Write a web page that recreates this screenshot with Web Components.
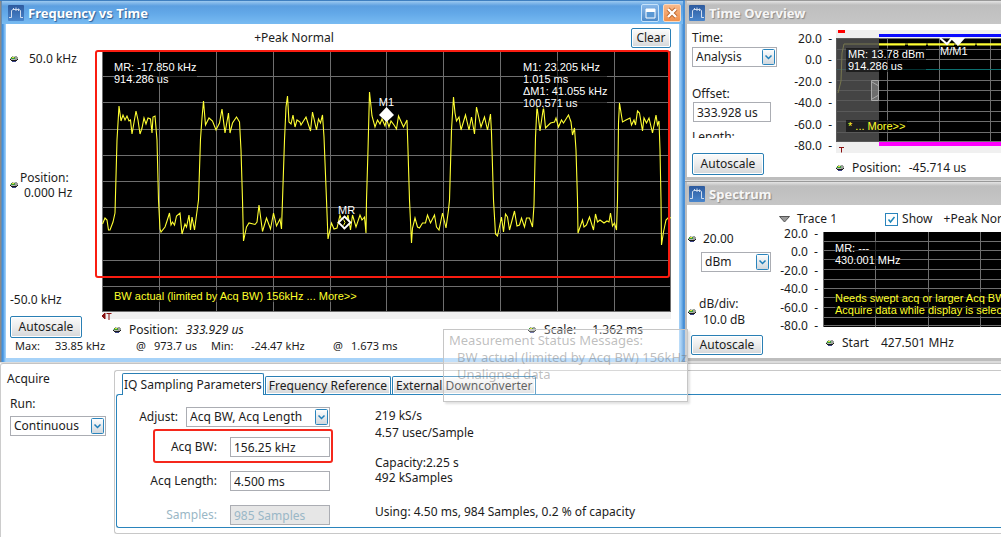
<!DOCTYPE html>
<html lang="en">
<head>
<meta charset="utf-8">
<title>Signal Analyzer</title>
<style>
html,body{margin:0;background:#fff}
body{font:12px/16px "Noto Sans","DejaVu Sans",sans-serif;color:#1c1c1c}
</style>
</head>
<body>
<analyzer-app></analyzer-app>
<script>
const base = `
*{box-sizing:border-box}
[hidden]{display:none}
button{font:inherit;color:inherit;height:22px;width:72px;padding:0;border:1px solid #2a7fb4;border-radius:2px;
 background:linear-gradient(#fbfbfb,#ececec 50%,#d4d6d8);box-shadow:inset 0 0 0 1px #fff;white-space:nowrap}
input,select{font:inherit;color:inherit;border:1px solid #abadb3;border-radius:0;background:#fff;height:20px;margin:0;outline:0}
input{padding:0 3px;width:100px}
select{appearance:none;padding:0 22px 0 3px;width:100%}
.combo{position:relative;display:block}
.combo svg{position:absolute;right:2px;top:2px;pointer-events:none}
label{display:block}
`;
const arrow = `<svg width="13" height="16" viewBox="0 0 13 16"><defs><linearGradient id="a" x2="0" y2="1"><stop stop-color="#fff"/><stop offset="1" stop-color="#cfd6dc"/></linearGradient></defs><rect x=".5" y=".5" width="12" height="15" rx="1" fill="url(#a)" stroke="#2a84bc"/><path d="M3.5 6.5l3 3 3-3" fill="none" stroke="#1f7fba" stroke-width="1.5"/></svg>`;
const define = (name, html) => {
  const t = document.createElement('template');
  t.innerHTML = html;
  customElements.define(name, class extends HTMLElement {
    constructor(){ super(); this.attachShadow({mode:'open'}).append(t.content.cloneNode(true)); }
  });
};
const lines = (list, fn) => list.map(fn).join('');

define('spin-knob', `<style>:host{display:block;width:8px;height:8px;flex:none}svg{display:block}</style>
<svg width="8" height="8" viewBox="0 0 8 8" shape-rendering="crispEdges"><path d="M2 1h5v1H2zM5 2h3v3H5z" fill="#9a9f9a"/><path d="M3 1h2v1H3z" fill="#cfd6cc"/><path d="M1 2h4v2H1z" fill="#3a9a3a"/><path d="M2 2h2v1H2z" fill="#e5e23c"/><path d="M0 3h1v2H0zM1 4h4v1H1z" fill="#b4b8b4"/><path d="M1 5h6v1H1zM0 4h1v1H0zM7 4h1v1H7z" fill="#1a1a1a"/><path d="M2 6h4v1H2z" fill="#3c4488"/></svg>`);

/* Window frame: a title bar with a spectrum icon, and a slot for the view */
define('scope-window', `<style>${base}
:host{display:flex;flex-direction:column;min-width:0;padding:0 0 3px 2px;background:#bdbdbd;border-top:1px solid #999}
header{height:23px;display:flex;align-items:center;gap:4px;padding:0 3px 0 2px;color:#f6f6f6;font:bold 13px/20px "Noto Sans",sans-serif;
 background:linear-gradient(#e4e4e4,#bebebe 4px,#c6c6c6);text-shadow:1px 1px 1px #8a8a8a;white-space:nowrap}
h2{font:inherit;margin:0;flex:1}
.view{background:#fff;flex:1;min-height:0;display:flex}
.view ::slotted(*){flex:1;min-width:0}
.ctl{display:none}
:host([active]){padding:0 5px 4px 6px;border-top:1px solid #3f7fc0;border-right:1px solid #4a90d8;
 background:linear-gradient(90deg,#8a8a8a 1px,#4090dc 2px,#4694e0 3px,#8cc4f4 5px,#a6d2f8 6px,#a6d2f8 calc(100% - 5px),#84bdf0 calc(100% - 3px),#3b86d0)}
:host([active]) header{background:linear-gradient(#9cc9f0,#5c9fe0 5px,#62a8e8 12px,#78bbf2);margin:0 -4px 0 -4px;padding:0 2px 0 6px;color:#fff;text-shadow:1px 1px 1px #2c5c94}
:host([active]) .ctl{display:block;width:18px;height:18px;padding:0;border:1px solid #c5e2fb;border-radius:2px;background:linear-gradient(#86b6e8,#4f8bc9);box-shadow:none}
:host([active]) .x{background:linear-gradient(#f8b98b,#f0904c);border-color:#fbd9bf}
.ctl svg,header>svg{display:block;flex:none}
</style>
<header><svg width="16" height="16" viewBox="0 0 16 16"><defs><linearGradient id="g" x2="0" y2="1"><stop stop-color="#2d5a9e"/><stop offset="1" stop-color="#4a86cc"/></linearGradient></defs><rect width="16" height="16" rx="1" fill="url(#g)"/><path d="M1 12.500h2.500V5.500L5 4.500h6l1.500 1V12.500H15M5.500 4.500V3M8 6V2.500M10.500 6V3.500" fill="none" stroke="#d0dcee" stroke-width="1"/></svg>
<h2><slot name="title"></slot></h2>
<button class="ctl" aria-label="Maximize"><svg width="16" height="16" viewBox="0 0 16 16"><path d="M4 4h9v9H4z" fill="#5a98d4" stroke="#fff"/><path d="M4 4h9v3H4z" fill="#fff"/></svg></button>
<button class="ctl x" aria-label="Close"><svg width="16" height="16" viewBox="0 0 16 16"><path d="M4 4l8 8M12 4l-8 8" stroke="#b9652c" stroke-width="4"/><path d="M4 4l8 8M12 4l-8 8" stroke="#fff" stroke-width="2.400"/></svg></button>
</header>
<div class="view"><slot></slot></div>`);

const wave = "102.5,224 105,218 107,220 108.5,230 110,230 113,222 115,213 117,140 119,106 121,121 123,115 125,120 127,116 129,121 130.5,120 132,134 136,111 138,120 140,134 142,128 144,118 146,124 148,118 150.5,119 152,133 153,117 155,116 157,140 158.5,200 160,229 161,232 165,227 167,221 169.5,213 171,225 172.5,222 174.5,225 176.5,216 180,213 182,234 185,224 186.5,227 189,215 190.5,230 192,217 194.5,230 196.5,215 198.500,200 200.5,139 202,118 203.5,101 205.5,125 209,118 212.5,121 216,130 219.5,123 222,109 225,133 228.5,113 230,133 232.5,123 236.5,117 239.5,122 241,150 242.5,200 243.5,241 246.5,227 249,223 255,224.5 257,222 259,205 262.5,231.5 266.5,218 270.5,229 273.5,213 276.5,226 280,219 281.5,229 282.5,200 284.5,140 286,107 287.5,96 289,122 291,124 293,115 295,127 297,120 300,122 301,125 306,117 310.5,131 312.5,112 316.5,130 318.5,119 320.5,123 322.5,115 324,137 326.5,200 328,239 331.5,223 334,229 337,228 340,215 344,228 348,215 350.5,230 352.5,215 356,227 360,215 362,220 364.5,217 366,233 366.5,200 368,150 369.5,92 372,116 375,127 377.5,120 380,124 382,119 385,126 386.5,119 389,127 391,121 394,125 396.5,129 398.5,116 403.5,127 407,120 408,150 409.5,200 411.5,243 412.5,228 415,218 417.5,227 419.5,228 422.5,223 425.5,223 427.5,215 430.5,223 434.5,215 436.5,227 439,230 442.5,213 446,228 448.5,210 449.5,200 451.5,130 453.5,97 455,113 456.5,121 459,117 461,130 465.5,115 469,130 471.5,117 474.5,134 476.5,107 481,127 484.5,117 487.5,130 490.5,114 491.5,133 493.5,200 495.5,234 497.5,236 501.5,217 503.5,232 505.5,214 507.5,217 509.5,230 514.5,211 517,226 519.5,225 521.5,218 524.5,227 526.5,218 529.5,218 532.5,227 534,205 535.5,137 537,106 540,131 543.5,107 545.5,128 550.5,123 554.5,122 556,118 558.5,127 561.5,120 563.5,123 568.5,115 571,122 572.5,135 574.5,128 576,150 577.5,200 578,233 582.5,220 584,227 586.5,225 589.5,217 593.5,230 595.5,214 597.5,222 600,220 604,223 607,221 609,222 610.5,213 612.5,226 614.5,223 616.5,230 617.5,200 618.5,123 619.5,103 622.5,122 626,120 630,118 631.5,125 634,120 635.5,125 637.5,111 639.5,113 642.5,131 644,118 646.5,123 649,118 652.5,133 656,115 657.5,125 659,121 660,150 661,200 661.5,245 663.5,232 666,220 669,217 671,218";

const note = `.note{position:absolute;font:11px/12px "Liberation Sans",Arial,sans-serif;color:#fff;background:rgba(0,0,0,.55);white-space:nowrap}
.yel{color:#ffff2a}
svg.plot{display:block;width:100%;height:100%}`;

define('frequency-view', `<style>${base}${note}
:host{display:grid;grid-template-columns:96px minmax(0,1fr) 8px;grid-template-rows:27px minmax(268px,1fr) 19px 16px 4px}
.top{grid-column:1/3;display:grid;grid-template-columns:248fr auto 337fr;align-items:center}
.top button{width:40px;height:20px;justify-self:end}
.side{grid-row:2/4;display:flex;flex-direction:column;padding-left:4px}
.side p,.side div{margin:0}
.row{display:flex;align-items:center;gap:11px}
.mid{display:grid;grid-template-columns:8px auto;column-gap:2px;line-height:15px;align-items:center;justify-content:start;padding-top:10px}
.mid spin-knob{grid-row:1/3}
.mid b{font-weight:400;padding-left:4px}
.fill{flex:1}
.side button{margin:8px 0 0}
.graph{position:relative;grid-column:2;display:flex;flex-direction:column}
.scr{position:relative;flex:1;min-height:0;background:#000}
.strip{height:7px;background:#f0f0f0}
.trig{position:absolute;left:-1px;bottom:-5px;display:block}
.box{position:absolute;left:-7px;top:-1px;right:1px;bottom:34px;border:2px solid #fa1c10;border-radius:3px}
.mark{transform:translateX(-50%);background:none}
.foot{grid-column:2;display:flex;align-items:center;justify-content:space-between;padding:3px 28px 0 11px}
.foot span{display:flex;align-items:center;gap:8px}
.foot b{font-weight:400;margin-left:8px}
.stats{grid-column:1/3;display:grid;grid-template-columns:40px 81px 18px 57px 40px 82px 18px 1fr;padding-left:9px;font-size:11px;line-height:16px;white-space:nowrap}
</style>
<div class="top"><span></span><span>+Peak Normal</span><button>Clear</button></div>
<div class="side">
 <div class="row"><spin-knob></spin-knob><span>50.0 kHz</span></div>
 <div class="fill"></div>
 <div class="mid"><spin-knob></spin-knob><span>Position:</span><b>0.000 Hz</b></div>
 <div class="fill"></div>
 <p>-50.0 kHz</p>
 <button>Autoscale</button>
</div>
<div class="graph"><div class="scr">
 <svg class="plot" viewBox="102 51 569 261" preserveAspectRatio="none">
 <g stroke="#6e6e6e" shape-rendering="crispEdges">${lines([102.5,159.5,216.5,273.5,330.5,386.5,443.5,500.5,557.5,614.5,670.5],x=>`<path d="M${x} 51V312"/>`)}${lines([51.5,76.5,102.5,129.5,155.5,181.5,207.5,233.5,260.5,286.5,311.5],y=>`<path d="M102 ${y}H671"/>`)}</g>
 <polyline points="${wave}" fill="none" stroke="#ffff32" stroke-width="1.1"/>
 <path d="M386.5 107l7.500 8-7.500 7-7.500-7z" fill="#fff"/>
 <path d="M344.500 216.500l6 6-6 6-6-6z" fill="#000" stroke="#fff" stroke-width="1.800"/><path d="M343.500 219.500q3 3 0 6" stroke="#ffff32" fill="none"/>
 </svg>
 <div class="note" style="left:12px;top:10px">MR: -17.850 kHz<br>914.286 us</div>
 <div class="note" style="left:421px;top:10px">M1: 23.205 kHz<br>1.015 ms<br>ΔM1: 41.055 kHz<br>100.571 us</div>
 <div class="note mark" style="left:50%;top:45px">M1</div>
 <div class="note mark" style="left:43%;top:153px">MR</div>
 <div class="note yel" style="left:12px;bottom:10px">BW actual (limited by Acq BW) 156kHz ... More&gt;&gt;</div>
 <div class="box"></div>
 </div><div class="strip"></div>
 <svg class="trig" width="12" height="12" viewBox="0 0 12 12"><path d="M4 1v6L1 4zM5.500 1.500h5M8 1.500V8" fill="#8a1010" stroke="#8a1010"/></svg>
</div>
<div class="foot"><span><spin-knob></spin-knob>Position:<i>333.929 us</i></span><span><spin-knob></spin-knob>Scale:<b>1.362 ms</b></span></div>
<div class="stats"><span>Max:</span><span>33.85 kHz</span><span>@</span><span>973.7 us</span><span>Min:</span><span>-24.47 kHz</span><span>@</span><span>1.673 ms</span></div>`);

const axis = `.axis{display:flex;flex-direction:column;justify-content:space-between;text-align:right;white-space:pre}`;

define('time-view', `<style>${base}${note}${axis}
:host{display:grid;grid-template-columns:93px 56px minmax(0,1fr);height:153px}
.side{display:flex;flex-direction:column;align-items:flex-start;padding:6px 0 0 5px}
.combo{width:85px;margin:1px 0 19px}
.side input{width:78px;margin-left:1px}
.cut{height:9px;overflow:hidden;line-height:16px;margin:7px 0 15px}
.axis{padding:7px 4px 0 0;height:130px}
.right{display:flex;flex-direction:column;padding-top:6px;overflow:hidden}
.scr{position:relative;flex:none;height:123px;background:#f0f0f0}
.scr svg{width:auto;height:100%}
.foot{display:flex;flex:none;align-items:center;gap:8px;height:24px;padding-top:6px;white-space:nowrap}
</style>
<div class="side"><label for="t">Time:</label><span class="combo"><select id="t"><option>Analysis</option></select>${arrow}</span>
<label for="o">Offset:</label><input id="o" value="333.928 us"><div class="cut">Length:</div><button>Autoscale</button></div>
<div class="axis"><span>20.0  -</span><span>0.0  -</span><span>-20.0  -</span><span>-40.0  -</span><span>-60.0  -</span><span>-80.0  -</span></div>
<div class="right"><div class="scr">
<svg class="plot" viewBox="836 30 565 123" preserveAspectRatio="xMinYMin slice">
<path d="M836 38h565v104H836z"/>
<g stroke="#6e6e6e" shape-rendering="crispEdges">${lines([836.5,887.5,939.5,990.5],x=>`<path d="M${x} 38V142"/>`)}${lines([38.5,49.5,59.5,80.5,90.5,100.5,111.5,121.5,132.5,141.500],y=>`<path d="M836 ${y}H1401"/>`)}</g>
<path d="M836 69.500H1401" stroke="#0d6f6f"/>
<path d="M838 93l3-12 1-28 2-9H1401" stroke="#ffff32" fill="none"/><path d="M879 44.500H1401" stroke="#ffff32" stroke-width="2" fill="none" stroke-dasharray="26 3 18 2"/>
<path d="M836 38h43v104h-43z" fill="#555" fill-opacity=".8"/>
<path d="M879 34h522v3H879z" fill="#0a0aff"/><path d="M879 142h522v4H879z" fill="#f0f"/><path d="M838 30h7v3h-7z" fill="#f00"/>
<path d="M871.500 80.500h7v20h-7zM872 82l6 3.500M872 99l6-3.500" fill="#888" fill-opacity=".6" stroke="#aaa"/>
<path d="M940 38l7 6 5-6" fill="none" stroke="#fff" stroke-width="2"/><path d="M950 38h15l-7 8z" fill="#fff"/>
<path d="M839 147.500h5M841.500 147.500v5" stroke="#8a1010"/>
</svg>
<div class="note" style="left:10px;top:18px;padding:0 2px">MR: 13.78 dBm<br>914.286 us</div>
<div class="note" style="left:104px;top:15px;background:none">M/M1</div>
<div class="note yel" style="left:10px;top:90px;padding:0 2px">* ... More&gt;&gt;</div>
</div>
<div class="foot"><spin-knob></spin-knob><span>Position:</span><span>-45.714 us</span></div></div>`);

define('spectrum-view', `<style>${base}${note}${axis}
:host{display:grid;grid-template-columns:86px 50px minmax(0,1fr);grid-template-rows:24px 101px 28px;height:153px}
.side{grid-row:1/4;display:flex;flex-direction:column;align-items:flex-start;padding:26px 0 0 1px}
.r{display:flex;gap:7px;align-items:center}
.combo{width:70px;margin:5px 0 24px 13px}
.db{display:grid;grid-template-columns:8px auto;column-gap:3px;align-items:center}
.db spin-knob{grid-row:1/3}.db b{font-weight:400;padding-left:4px}
.side button{margin:7px 0 0 3px;height:20px}
.top{grid-column:2/4;display:flex;align-items:center;padding:4px 0 0 6px;white-space:nowrap;overflow:hidden}
.top svg{flex:none;margin-right:7px}
.top label{display:flex;align-items:center;gap:4px;margin:0 11px 0 48px}
.top input{appearance:none;width:13px;height:13px;padding:0;border:1px solid #2a84bc;background:#fff}
.tick{position:relative;display:flex}.tick svg{position:absolute;left:0;top:0;margin:0;pointer-events:none}
.axis{margin:-3px 5px 0 0;height:108px}
.scr{position:relative;margin-top:3px;height:95px;overflow:hidden;background:#000}
.scr svg{width:auto}
.foot{grid-column:3;display:flex;align-items:center;gap:8px;padding:0 0 2px 3px;white-space:nowrap}
.foot b{font-weight:400;margin-left:4px}
</style>
<div class="side"><div class="r"><spin-knob></spin-knob><span>20.00</span></div>
<span class="combo"><select aria-label="Amplitude unit"><option>dBm</option></select>${arrow}</span>
<div class="db"><spin-knob></spin-knob><span>dB/div:</span><b>10.0 dB</b></div><button>Autoscale</button></div>
<div class="top"><svg width="11" height="7" viewBox="0 0 11 7"><path d="M.5.500h10L5.500 6z" fill="#9a9a9a" stroke="#555"/></svg>Trace 1
<label for="s"><span class="tick"><input type="checkbox" id="s" checked><svg width="13" height="13" viewBox="0 0 13 13"><path d="M3.500 6.500l2 2.500 4-5" fill="none" stroke="#1f86b8" stroke-width="1.500"/></svg></span>Show</label>+Peak Normal</div>
<div class="axis"><span>20.0  -</span><span>0.0  -</span><span>-20.0  -</span><span>-40.0  -</span><span>-60.0  -</span><span>-80.0  -</span></div>
<div class="scr"><svg class="plot" viewBox="823 232 577 95" preserveAspectRatio="xMinYMin slice"><g stroke="#6e6e6e" fill="none" shape-rendering="crispEdges">${lines([823.5,875.5,928.5,980.5],x=>`<path d="M${x} 232V327"/>`)}${lines([241.5,250.5,259.5,269.5,279.5,288.5,297.5,307.5,317.5,325.5],y=>`<path d="M823 ${y}H1400"/>`)}</g></svg>
<div class="note" style="left:12px;top:10px">MR: ---<br>430.001 MHz</div>
<div class="note yel" style="left:12px;top:60px">Needs swept acq or larger Acq BW.<br>Acquire data while display is selected.</div></div>
<div class="foot"><spin-knob></spin-knob><span>Start</span><b>427.501 MHz</b></div>`);

define('acquire-panel', `<style>${base}
:host{display:flex;border-top:1px solid #c4c4c4;border-left:1px solid #ccc;border-top-left-radius:3px;background:#fff}
.run{width:113px;padding:7px 0 0 6px}
.run label{margin:9px 0 4px 3px}
.run .combo{width:96px;margin-left:3px}
.group{flex:1;min-width:0;border:1px solid #c8c8c8;border-right:0;border-radius:3px 0 0 3px;margin:6px 0 3px;padding:1px 0 5px 1px}
nav{display:flex;align-items:flex-end;gap:1px;padding-left:6px;height:22px;position:relative}
nav button{width:auto;height:18px;line-height:16px;padding:0 3px;border-bottom:0;border-radius:2px 2px 0 0}
nav button[aria-selected=true]{height:22px;margin-bottom:-1px;background:#fff;box-shadow:none;position:relative;padding:0 1px}
.body{display:flex;gap:45px;border:1px solid #2a84bc;border-right:0;border-radius:3px 0 0 3px;height:134px;padding:12px 0 0 18px}
form{width:195px;display:flex;flex-direction:column}
.f{display:flex;align-items:center;justify-content:flex-end;gap:13px;height:20px;margin:0 0 14px;white-space:nowrap}
.f.a{gap:8px;margin:0 0 10px}
.f .combo{width:144px}
.hl{position:relative}
.hl i{position:absolute;left:18px;top:-8px;right:-3px;bottom:-6px;border:2px solid #f5281c;border-radius:3px}
.off{color:#9ab7c6}
input:disabled{background:#e6e6e6;color:#9ab7c6}
.info p{margin:0 0 14px;line-height:17px;white-space:nowrap}
.info .n{line-height:15px;margin-bottom:18px}
</style>
<div class="run"><div>Acquire</div><label for="r">Run:</label><span class="combo"><select id="r"><option>Continuous</option></select>${arrow}</span></div>
<div class="group"><nav role="tablist"><button role="tab" aria-selected="true">IQ Sampling Parameters</button><button role="tab">Frequency Reference</button><button role="tab">External Downconverter</button></nav>
<div class="body"><form>
<div class="f a"><label for="ad">Adjust:</label><span class="combo"><select id="ad"><option>Acq BW, Acq Length</option></select>${arrow}</span></div>
<div class="f hl"><label for="bw">Acq BW:</label><input id="bw" value="156.25 kHz"><i></i></div>
<div class="f"><label for="ln">Acq Length:</label><input id="ln" value="4.500 ms"></div>
<div class="f off"><label for="sm">Samples:</label><input id="sm" value="985 Samples" disabled></div>
</form><div class="info"><p>219 kS/s<br>4.57 usec/Sample</p><p class="n">Capacity:2.25 s<br>492 kSamples</p><p>Using: 4.50 ms, 984 Samples, 0.2 % of capacity</p></div></div></div>`);

define('status-tip', `<style>:host{display:block;position:absolute;left:443px;top:329px;width:245px;height:73px;box-sizing:border-box;padding:2px 5px;border:1px solid #c6c6c6;
background:rgba(255,255,255,.3);box-shadow:2px 2px 2px rgba(0,0,0,.12);color:rgba(110,110,110,.45);font-size:13px;line-height:17px;white-space:nowrap;pointer-events:none}
div{padding-left:8px}</style><slot></slot><div>BW actual (limited by Acq BW) 156kHz</div><div>Unaligned data</div>`);

define('analyzer-app', `<style>${base}
:host{display:flex;flex-direction:column;position:relative;min-height:100vh;overflow:hidden}
.top{display:grid;grid-template-columns:minmax(0,1fr) 316px;background:#dcdcdc;padding-bottom:1px}
.col{display:flex;flex-direction:column;gap:1px}
acquire-panel{flex:1}
</style>
<div class="top"><scope-window active><span slot="title">Frequency vs Time</span><frequency-view></frequency-view></scope-window>
<div class="col"><scope-window><span slot="title">Time Overview</span><time-view></time-view></scope-window>
<scope-window><span slot="title">Spectrum</span><spectrum-view></spectrum-view></scope-window></div></div>
<acquire-panel></acquire-panel><status-tip>Measurement Status Messages:</status-tip>`);
</script>
</body>
</html>
